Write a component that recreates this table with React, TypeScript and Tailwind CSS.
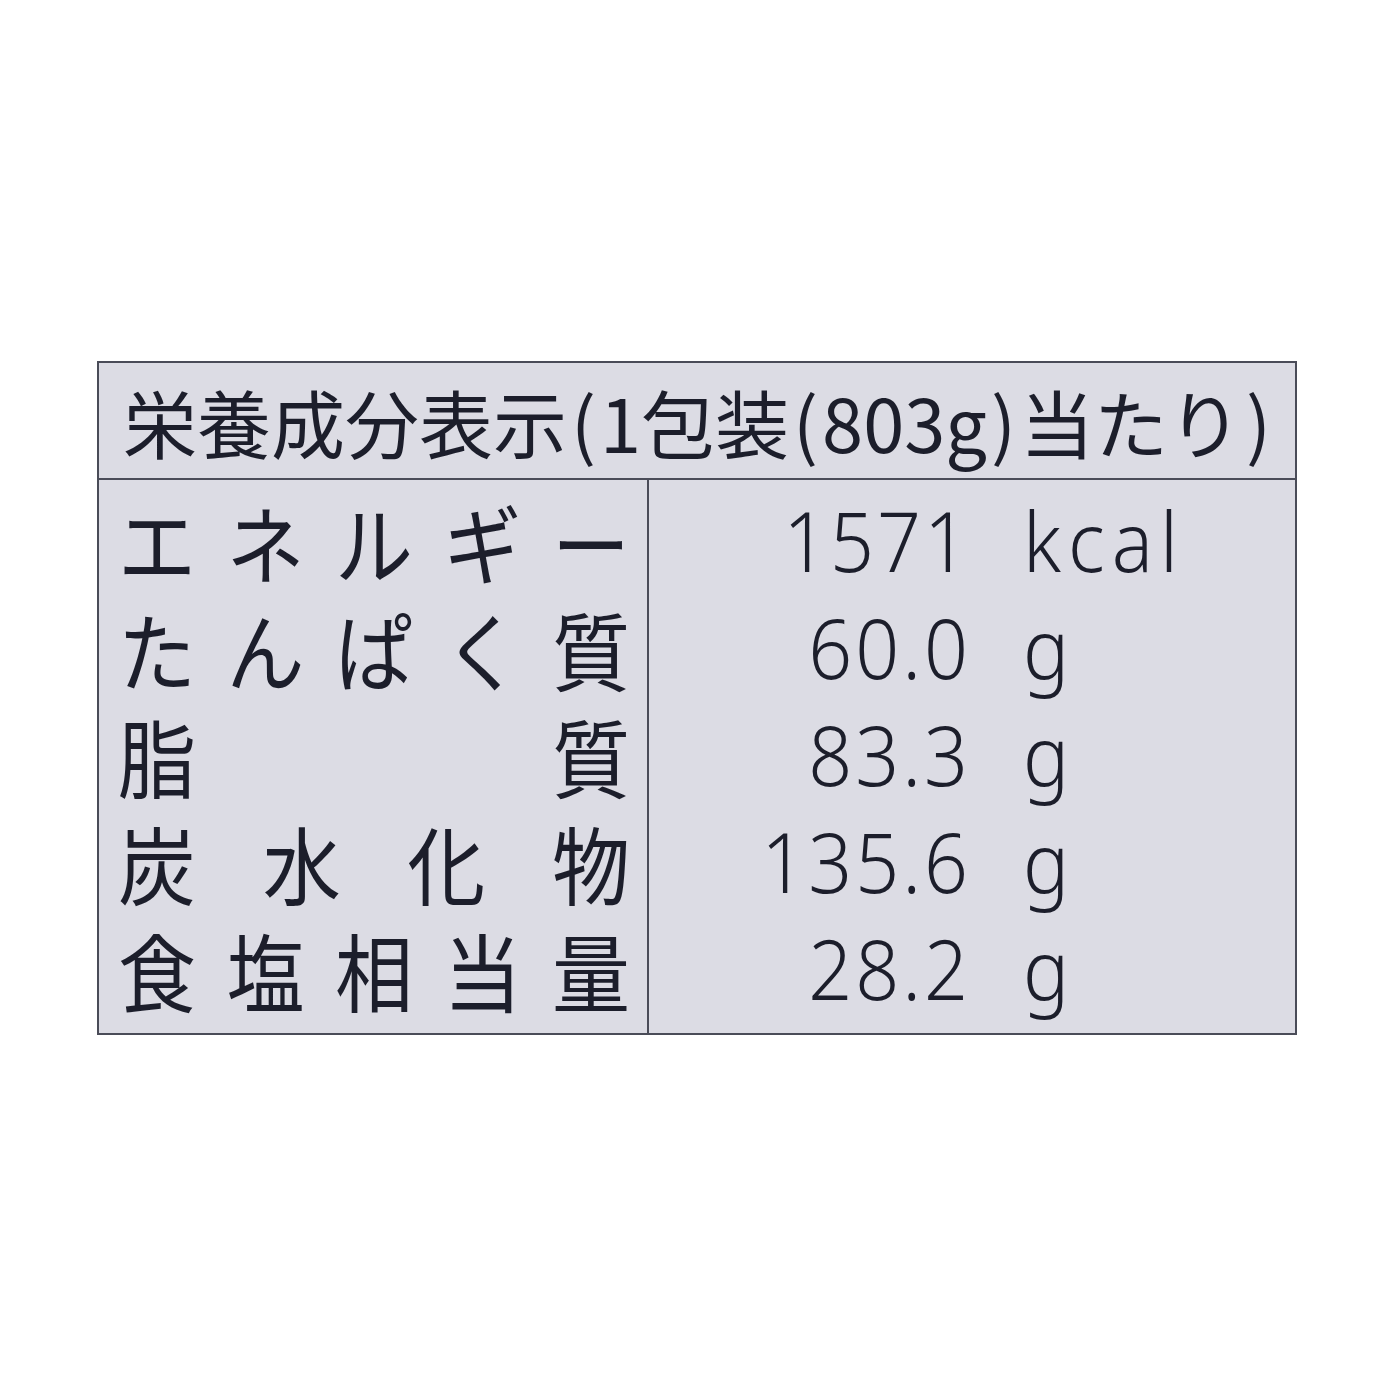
const rows = [
  { label: ["エ", "ネ", "ル", "ギ", "ー"], value: "1571", unit: "kcal" },
  { label: ["た", "ん", "ぱ", "く", "質"], value: "60.0", unit: "g" },
  { label: ["脂", "質"], value: "83.3", unit: "g" },
  { label: ["炭", "水", "化", "物"], value: "135.6", unit: "g" },
  { label: ["食", "塩", "相", "当", "量"], value: "28.2", unit: "g" },
];

function Paren({ c }: { c: string }) {
  return <span className="mx-[4px]">{c}</span>;
}

export default function App() {
  return (
    <div className="h-[1400px] w-[1400px] bg-white pl-[97px] pt-[361px] text-[#1c1e2b] [font-family:'Noto_Sans','Noto_Sans_CJK_JP',sans-serif]">
      <div className="flex h-[674px] w-[1200px] flex-col border-2 border-[#4a4c58] bg-[#dcdce4]">
        {/* header */}
        <div className="flex h-[117px] shrink-0 items-center border-b-2 border-[#4a4c58] pl-[24px]">
          <span className="text-[74px] leading-none [font-family:'Noto_Sans_CJK_JP',sans-serif]">
            栄養成分表示<Paren c="(" />1包装<Paren c="(" />803g<Paren c=")" />当たり<Paren c=")" />
          </span>
        </div>

        {/* body */}
        <div className="flex flex-1">
          <div className="flex w-[550px] flex-col border-r-2 border-[#4a4c58] pl-[19px] pr-[17px] pt-[7px]">
            {rows.map((r, i) => (
              <div key={i} className="flex h-[107px] items-center justify-between">
                {r.label.map((c, j) => (
                  <span
                    key={j}
                    className="inline-block scale-y-[1.1] text-[78px] leading-none [font-family:'Noto_Sans_CJK_JP',sans-serif]"
                  >
                    {c}
                  </span>
                ))}
              </div>
            ))}
          </div>
          <div className="flex flex-1 flex-col pt-[7px]">
            {rows.map((r, i) => (
              <div key={i} className="flex h-[107px] items-center">
                <span className="inline-block w-[322px] scale-y-[1.08] text-right text-[77px] font-light leading-none tracking-[3px]">
                  {r.value}
                </span>
                <span className="ml-[52px] inline-block scale-y-[1.08] text-[77px] font-light leading-none tracking-[7px]">
                  {r.unit}
                </span>
              </div>
            ))}
          </div>
        </div>
      </div>
    </div>
  );
}
